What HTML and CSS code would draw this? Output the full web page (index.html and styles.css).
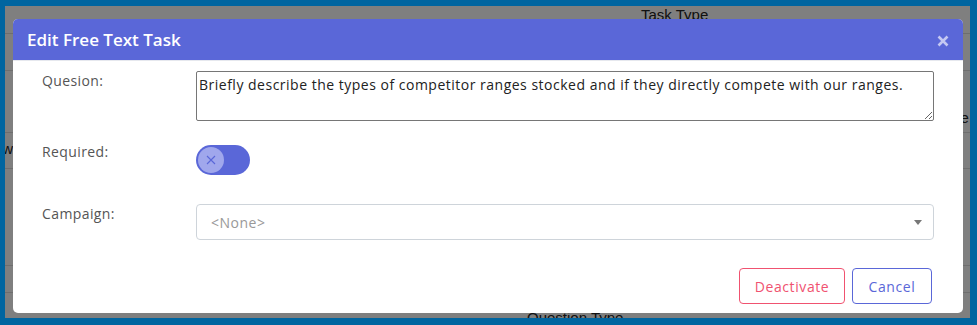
FILE: index.html
```html
<!DOCTYPE html>
<html lang="en">
<head>
    <meta charset="UTF-8">
    <meta name="viewport" content="width=device-width, initial-scale=1.0">
    <title>Edit Free Text Task</title>
    <link rel="stylesheet" href="styles.css">
</head>
<body>
    <div class="page">
        <div class="bg-table">
            <div class="bg-row r1"><span class="bg-head">Task Type</span></div>
            <div class="bg-row r2"></div>
            <div class="bg-row r3"><span class="bg-cell right">Title</span></div>
            <div class="bg-row r4"><span class="bg-cell left">Now</span></div>
            <div class="bg-row r5"></div>
            <div class="bg-row r6"></div>
            <div class="bg-row r7"><span class="bg-head q">Question Type</span><span class="bg-cell r">R</span></div>
        </div>
        <div class="overlay"></div>

        <div class="modal">
            <div class="modal-header">
                <h1>Edit Free Text Task</h1>
                <svg class="close" width="12" height="12" viewBox="0 0 12 12"><path d="M1.5 1.5 L10.5 10.5 M10.5 1.5 L1.5 10.5" stroke="#c4c8f2" stroke-width="2.6" fill="none"/></svg>
            </div>
            <div class="modal-body">
                <div class="row">
                    <label for="question">Quesion:</label>
                    <textarea id="question">Briefly describe the types of competitor ranges stocked and if they directly compete with our ranges.</textarea>
                </div>
                <div class="row row-toggle">
                    <label>Required:</label>
                    <div class="toggle">
                        <span class="knob">
                            <svg width="12" height="12" viewBox="0 0 12 12"><path d="M2 2 L10 10 M10 2 L2 10" stroke="#5a67d8" stroke-width="1.1" fill="none"/></svg>
                        </span>
                    </div>
                </div>
                <div class="row row-select">
                    <label for="campaign">Campaign:</label>
                    <div class="select" id="campaign">
                        <span>&lt;None&gt;</span>
                        <span class="caret"></span>
                    </div>
                </div>
                <div class="actions">
                    <button class="btn btn-red">Deactivate</button>
                    <button class="btn btn-blue">Cancel</button>
                </div>
            </div>
        </div>
    </div>
</body>
</html>
```
FILE: styles.css
```css
body {
    margin: 0;
    padding: 6px 7px 7px 5px;
    background-color: #0065a0;
    font-family: "Open Sans", sans-serif;
    height: 325px;
    box-sizing: border-box;
    overflow: hidden;
}

.page {
    position: relative;
    height: 312px;
    background-color: white;
    overflow: hidden;
}

.bg-row {
    border-bottom: 1px solid #ddd;
    box-sizing: border-box;
    font-family: "Liberation Sans", Arial, sans-serif;
    font-size: 15px;
    color: #222;
    position: relative;
}

.r1 { height: 28px; }
.r2 { height: 37px; }
.r3 { height: 62px; }
.r4 { height: 36px; }
.r5 { height: 97px; }
.r6 { height: 27px; }
.r7 { height: 40px; border-bottom: none; }

.bg-head {
    display: inline-block;
    margin: 0 0 0 636px;
    line-height: 18px;
}

.bg-head.q {
    margin: 0 0 0 522px;
    padding-top: 16px;
}

.bg-cell.right {
    display: inline-block;
    margin: 38px 0 0 936px;
}

.bg-cell.left {
    display: inline-block;
    margin: 7px 0 0 -22px;
}

.bg-cell.r {
    margin-left: 338px;
}

.overlay {
    position: absolute;
    inset: 0;
    background-color: rgba(0, 0, 0, 0.5);
}

.modal {
    position: absolute;
    left: 8px;
    top: 13px;
    width: 950px;
    height: 294px;
    background-color: white;
    border-radius: 5px;
    overflow: hidden;
}

.modal-header {
    height: 41px;
    background-color: #5a67d8;
    display: flex;
    align-items: center;
    justify-content: space-between;
    padding: 0 14px 0 14px;
    border-bottom: 1px solid #e6e8ee;
}

.modal-header h1 {
    margin: 0;
    font-size: 17px;
    font-weight: 600;
    color: white;
}

.close {
    margin-top: 3px;
}

.modal-body {
    padding: 10px 29px 0 29px;
}

.row {
    display: flex;
    align-items: flex-start;
}

.row label {
    width: 154px;
    flex-shrink: 0;
    font-size: 14px;
    line-height: 20px;
    color: #555;
    letter-spacing: 0.4px;
}

textarea {
    width: 738px;
    height: 50px;
    box-sizing: border-box;
    border: 1px solid #767676;
    border-radius: 2px;
    padding: 3px 2px;
    font-family: "Open Sans", sans-serif;
    font-size: 14px;
    letter-spacing: 0.5px;
    color: #222;
    resize: vertical;
    margin: 0;
}

.row-toggle {
    margin-top: 24px;
}

.row-toggle label {
    margin-top: -3px;
}

.toggle {
    width: 54px;
    height: 30px;
    border-radius: 15px;
    background-color: #5a67d8;
    display: flex;
    align-items: center;
    padding-left: 2px;
    box-sizing: border-box;
}

.knob {
    width: 26px;
    height: 26px;
    border-radius: 50%;
    background-color: #a0a7ec;
    display: flex;
    align-items: center;
    justify-content: center;
}

.row-select {
    margin-top: 29px;
}

.row-select label {
    margin-top: 0;
}

.select {
    width: 738px;
    height: 36px;
    box-sizing: border-box;
    border: 1px solid #ced4da;
    border-radius: 4px;
    display: flex;
    align-items: center;
    justify-content: space-between;
    padding: 0 11px 0 14px;
    font-size: 14px;
    letter-spacing: 0.5px;
    color: #999;
}

.caret {
    width: 0;
    height: 0;
    border-left: 4px solid transparent;
    border-right: 4px solid transparent;
    border-top: 5px solid #777;
}

.actions {
    display: flex;
    justify-content: flex-end;
    gap: 7px;
    margin-top: 28px;
    padding-right: 2px;
}

.btn {
    height: 36px;
    background-color: white;
    border-radius: 4px;
    font-family: "Open Sans", sans-serif;
    font-size: 14px;
    letter-spacing: 0.6px;
    padding: 0;
    cursor: pointer;
}

.btn-red {
    width: 106px;
    border: 1px solid #f05270;
    color: #f05270;
}

.btn-blue {
    width: 80px;
    border: 1px solid #5a67d8;
    color: #5a67d8;
}
```
